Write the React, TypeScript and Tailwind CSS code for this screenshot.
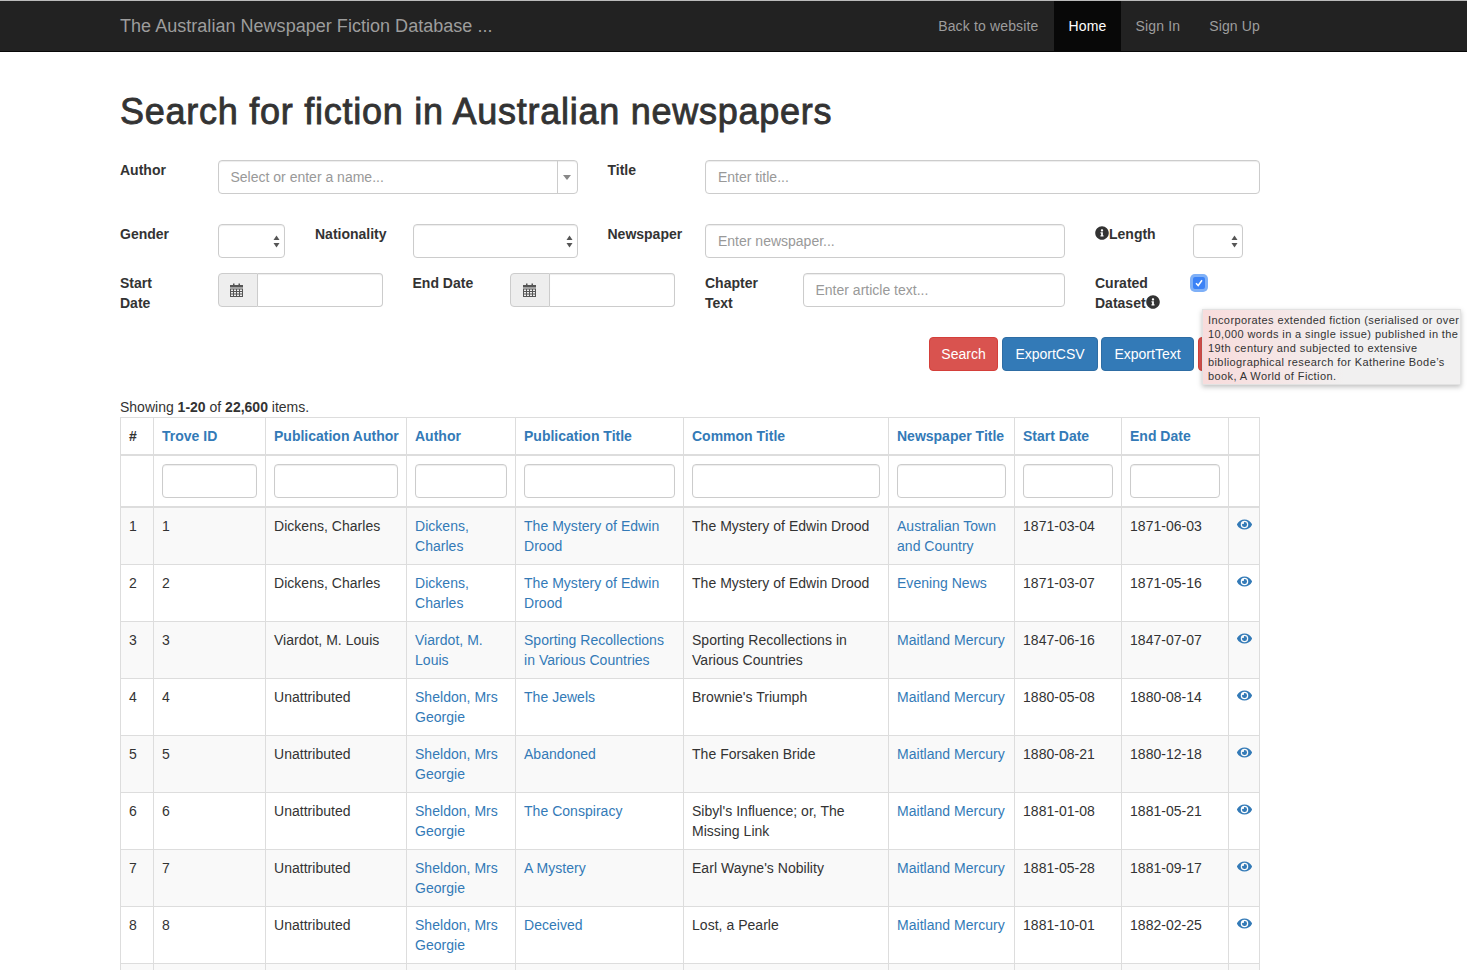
import { FaEye, FaInfoCircle } from "react-icons/fa"

const rows = [
  ["1", "1", "Dickens, Charles", "Dickens, Charles", "The Mystery of Edwin Drood", "The Mystery of Edwin Drood", "Australian Town and Country", "1871-03-04", "1871-06-03"],
  ["2", "2", "Dickens, Charles", "Dickens, Charles", "The Mystery of Edwin Drood", "The Mystery of Edwin Drood", "Evening News", "1871-03-07", "1871-05-16"],
  ["3", "3", "Viardot, M. Louis", "Viardot, M. Louis", "Sporting Recollections in Various Countries", "Sporting Recollections in Various Countries", "Maitland Mercury", "1847-06-16", "1847-07-07"],
  ["4", "4", "Unattributed", "Sheldon, Mrs Georgie", "The Jewels", "Brownie's Triumph", "Maitland Mercury", "1880-05-08", "1880-08-14"],
  ["5", "5", "Unattributed", "Sheldon, Mrs Georgie", "Abandoned", "The Forsaken Bride", "Maitland Mercury", "1880-08-21", "1880-12-18"],
  ["6", "6", "Unattributed", "Sheldon, Mrs Georgie", "The Conspiracy", "Sibyl's Influence; or, The Missing Link", "Maitland Mercury", "1881-01-08", "1881-05-21"],
  ["7", "7", "Unattributed", "Sheldon, Mrs Georgie", "A Mystery", "Earl Wayne's Nobility", "Maitland Mercury", "1881-05-28", "1881-09-17"],
  ["8", "8", "Unattributed", "Sheldon, Mrs Georgie", "Deceived", "Lost, a Pearle", "Maitland Mercury", "1881-10-01", "1882-02-25"],
]

const headers = ["Trove ID", "Publication Author", "Author", "Publication Title", "Common Title", "Newspaper Title", "Start Date", "End Date"]
const widths = [33, 112, 141, 109, 168, 205, 126, 107, 107, 31]

const inputClass =
  "block w-full h-[34px] px-3 border border-[#ccc] rounded bg-white text-sm text-[#555] placeholder:text-[#999] shadow-[inset_0_1px_1px_rgba(0,0,0,0.075)]"
const labelClass = "font-bold leading-5"
const cell = "border border-[#ddd] p-2 align-top leading-5"

function SelectArrows() {
  return (
    <svg width="7" height="13" viewBox="0 0 7 13" className="absolute right-[4px] top-[10px]" fill="#555">
      <path d="M3.5 0.5 L6.5 5 H0.5 Z" />
      <path d="M3.5 12.5 L6.5 8 H0.5 Z" />
    </svg>
  )
}

function NativeSelect({ width }: { width: string }) {
  return <div className={`relative h-[34px] border border-[#ccc] rounded bg-white shadow-[inset_0_1px_1px_rgba(0,0,0,0.075)] ${width}`}><SelectArrows /></div>
}

function CalendarIcon() {
  return (
    <svg width="13" height="14" viewBox="0 0 13 14" fill="#555">
      <path d="M0 2h3V0.5h1.5V2h4V0.5H10V2h3v2.5H0z" />
      <path fillRule="evenodd" d="M0 5.5h13V14H0zM1 6.5v1.5h2V6.5zM4 6.5v1.5h2V6.5zM7 6.5v1.5h2V6.5zM10 6.5v1.5h2V6.5zM1 9v1.5h2V9zM4 9v1.5h2V9zM7 9v1.5h2V9zM10 9v1.5h2V9zM1 11.5V13h2v-1.5zM4 11.5V13h2v-1.5zM7 11.5V13h2v-1.5zM10 11.5V13h2v-1.5z" />
    </svg>
  )
}

function DateInput() {
  return (
    <div className="flex h-[34px]">
      <span className="flex items-center justify-center w-10 pr-[2px] border border-[#ccc] rounded-l bg-[#eee]">
        <CalendarIcon />
      </span>
      <input className="flex-1 min-w-0 border border-l-0 border-[#ccc] rounded-r bg-white shadow-[inset_0_1px_1px_rgba(0,0,0,0.075)]" />
    </div>
  )
}

function Button({ color, children }: { color: string; children: string }) {
  return (
    <button className={`h-[34px] rounded border text-sm text-white ${color}`}>{children}</button>
  )
}

export default function App() {
  return (
    <div className="h-[970px] overflow-hidden bg-white text-sm leading-5 text-[#333] font-['Liberation_Sans',Arial,sans-serif]">
      <nav className="h-[52px] bg-[#222] border-t border-t-[#bbb] border-b border-b-[#080808]">
        <div className="w-[1140px] ml-[120px] flex items-center justify-between h-full">
          <a className="text-lg tracking-[0.03px] text-[#9d9d9d]">The Australian Newspaper Fiction Database ...</a>
          <div className="flex h-full items-center text-[#9d9d9d] tracking-[0.15px]">
            <a className="px-[15px]">Back to website</a>
            <a className="px-[15px] w-[67px] h-full flex items-center bg-[#080808] text-white">Home</a>
            <a className="pl-[15px]">Sign In</a>
            <a className="pl-[29px]">Sign Up</a>
          </div>
        </div>
      </nav>

      <main className="w-[1140px] ml-[120px]">
        <h1 className="text-[36px] leading-[40px] font-normal tracking-[0.74px] [-webkit-text-stroke:0.85px_#333] mt-[40px] mb-[28px]">Search for fiction in Australian newspapers</h1>

        <form className="w-[1170px] -ml-[15px]">
          <div className="grid grid-cols-12 mb-[30px]">
            <div className={`col-span-1 px-[15px] ${labelClass}`}>Author</div>
            <div className="col-span-4 px-[15px]">
              <div className="flex h-[34px] border border-[#ccc] rounded bg-white shadow-[inset_0_1px_1px_rgba(0,0,0,0.075)]">
                <span className="flex-1 pl-3 leading-[32px] text-[#999]">Select or enter a name...</span>
                <span className="flex items-center justify-center w-[20px] border-l border-[#ccc]">
                  <span className="border-x-[4px] border-x-transparent border-t-[5px] border-t-[#888]"></span>
                </span>
              </div>
            </div>
            <div className={`col-span-1 px-[15px] ${labelClass}`}>Title</div>
            <div className="col-span-6 px-[15px]">
              <input className={inputClass} placeholder="Enter title..." />
            </div>
          </div>

          <div className="grid grid-cols-12 mb-[15px]">
            <div className={`col-span-1 px-[15px] ${labelClass}`}>Gender</div>
            <div className="col-span-1 px-[15px]"><NativeSelect width="w-full" /></div>
            <div className={`col-span-1 px-[15px] ${labelClass}`}>Nationality</div>
            <div className="col-span-2 px-[15px]"><NativeSelect width="w-full" /></div>
            <div className={`col-span-1 px-[15px] ${labelClass}`}>Newspaper</div>
            <div className="col-span-4 px-[15px]">
              <input className={inputClass} placeholder="Enter newspaper..." />
            </div>
            <div className={`col-span-1 px-[15px] whitespace-nowrap ${labelClass}`}>
              <FaInfoCircle className="inline-block align-[-1px] text-[14px]" />Length
            </div>
            <div className="col-span-1 px-[15px]"><NativeSelect width="w-[50px]" /></div>
          </div>

          <div className="grid grid-cols-12 mb-[24px]">
            <div className={`col-span-1 px-[15px] ${labelClass}`}>Start<br />Date</div>
            <div className="col-span-2 px-[15px]"><DateInput /></div>
            <div className={`col-span-1 px-[15px] ${labelClass}`}>End Date</div>
            <div className="col-span-2 px-[15px]"><DateInput /></div>
            <div className={`col-span-1 px-[15px] ${labelClass}`}>Chapter Text</div>
            <div className="col-span-3 px-[15px]">
              <input className={inputClass} placeholder="Enter article text..." />
            </div>
            <div className={`col-span-1 px-[15px] ${labelClass}`}>
              Curated Dataset<FaInfoCircle className="inline-block align-[-1px] text-[14px]" />
            </div>
            <div className="col-span-1 px-[15px] pt-[4px]">
              <span className="flex items-center justify-center w-[12px] h-[12px] rounded-[2px] bg-[#3b82f6] ring-[3px] ring-[#7fb0f7]">
                <svg width="8" height="8" viewBox="0 0 8 8" fill="none" stroke="white" strokeWidth="1.5">
                  <path d="M1 4.2 L3.2 6.5 L7 1.2" />
                </svg>
              </span>
            </div>
          </div>
        </form>

        <div className="relative flex justify-end gap-[4px] h-[34px]">
          <Button color="w-[69px] bg-[#d9534f] border-[#d43f3a]">Search</Button>
          <Button color="w-[96px] -mr-px bg-[#337ab7] border-[#2e6da4]">ExportCSV</Button>
          <Button color="w-[93px] bg-[#337ab7] border-[#2e6da4]">ExportText</Button>
          <Button color="w-[62px] bg-[#d9534f] border-[#d43f3a]"> </Button>
          <div className="absolute left-[1082px] -top-[28px] w-[259px] h-[76px] pl-[5px] pt-[3px] text-[11px] leading-[14px] tracking-[0.4px] whitespace-nowrap text-[#333] bg-[linear-gradient(90deg,#f8dcdc_0%,#f6e3e3_22%,#f1f0f0_55%)] border border-[#e2e2e2] shadow-[0_2px_5px_rgba(0,0,0,0.25)]">
            Incorporates extended fiction (serialised or over<br />
            10,000 words in a single issue) published in the<br />
            19th century and subjected to extensive<br />
            bibliographical research for Katherine Bode’s<br />
            book, A World of Fiction.
          </div>
        </div>

        <div className="mt-[26px] h-5">Showing <b>1-20</b> of <b>22,600</b> items.</div>

        <table className="table-fixed w-[1139px] border-collapse">
          <colgroup>
            {widths.map((w, i) => <col key={i} style={{ width: w }} />)}
          </colgroup>
          <thead>
            <tr className="h-[37px]">
              <th className={`${cell} pt-[8px] pb-[6px] border-b-2 text-left`}>#</th>
              {headers.map((h) => (
                <th key={h} className={`${cell} pt-[8px] pb-[6px] border-b-2 text-left text-[#337ab7] whitespace-nowrap`}>{h}</th>
              ))}
              <th className={`${cell} pt-[8px] pb-[6px] border-b-2`}></th>
            </tr>
            <tr>
              <td className={`${cell} border-b-2`}></td>
              {headers.map((h) => (
                <td key={h} className={`${cell} border-b-2`}>
                  <input className={inputClass} />
                </td>
              ))}
              <td className={`${cell} border-b-2`}></td>
            </tr>
          </thead>
          <tbody>
            {rows.map((r, i) => (
              <tr key={r[0]} className={i % 2 === 0 ? "bg-[#f9f9f9]" : "bg-white"}>
                {r.map((v, j) => (
                  <td key={j} className={`${cell} tracking-[0.03px] ${j === 3 || j === 4 || j === 6 ? "text-[#337ab7]" : ""}`}>{v}</td>
                ))}
                <td className={cell}>
                  <FaEye className="text-[#337ab7] text-[15px] mt-[1px]" />
                </td>
              </tr>
            ))}
            <tr className="bg-[#f9f9f9] h-[57px]">
              {widths.map((w, i) => <td key={i} className={cell}></td>)}
            </tr>
          </tbody>
        </table>
      </main>
    </div>
  )
}
